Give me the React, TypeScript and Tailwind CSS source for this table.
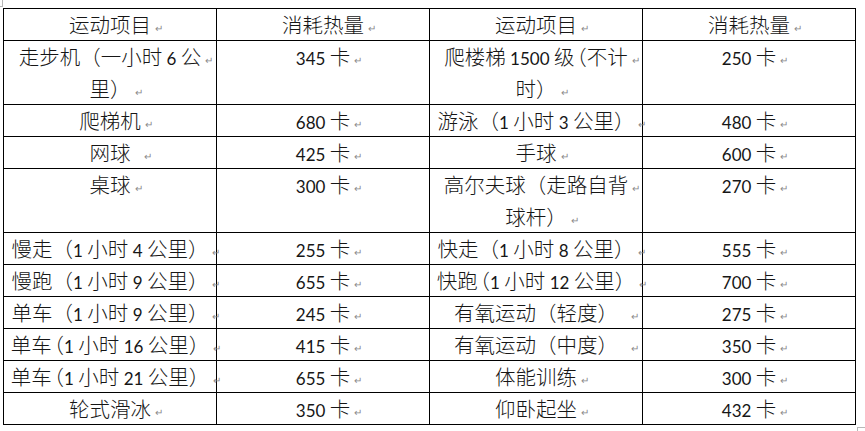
import React from "react";

// 每个单元格：字符串或多行数组；"^（" 表示被 Word 压缩的左括号
type Cell = string | string[];

const rows: Cell[][] = [
    [["走步机（一小时 6 公", "里）"], "345 卡", ["爬楼梯 1500 级^（不计", "时）"], "250 卡"],
    ["爬梯机", "680 卡", "游泳（1 小时 3 公里）", "480 卡"],
    ["网球 ", "425 卡", "手球", "600 卡"],
    ["桌球", "300 卡", ["高尔夫球（走路自背", "球杆）"], "270 卡"],
    ["慢走（1 小时 4 公里）", "255 卡", "快走（1 小时 8 公里）", "555 卡"],
    ["慢跑（1 小时 9 公里）", "655 卡", "快跑^（1 小时 12 公里）", "700 卡"],
    ["单车（1 小时 9 公里）", "245 卡", "有氧运动（轻度） ", "275 卡"],
    ["单车^（1 小时 16 公里）", "415 卡", "有氧运动（中度） ", "350 卡"],
    ["单车^（1 小时 21 公里）", "655 卡", "体能训练", "300 卡"],
    ["轮式滑冰", "350 卡", "仰卧起坐", "432 卡"],
];

const headers = ["运动项目", "消耗热量", "运动项目", "消耗热量"];

// 把一行文字拆成 CJK 部分和拉丁/数字部分
function renderText(text: string) {
    const parts = text.split(/(\^（|[\x20-\x7e]+)/).filter((p) => p !== "");
    return parts.map((p, i) => {
        if (p === "^（") {
            return (
                <span key={i} className="-ml-[0.4em]">
                    （
                </span>
            );
        }
        if (/^[\x20-\x7e]+$/.test(p)) {
            return (
                <span key={i} className="font-['Lato'] font-normal text-[17px]">
                    {p}
                </span>
            );
        }
        return <span key={i}>{p}</span>;
    });
}

function Line({ text, tall }: { text: string; tall: boolean }) {
    const trailing = text.endsWith(" ");
    const body = trailing ? text.trimEnd() : text;
    return (
        <div className={`${tall ? "h-[31.5px]" : "h-[31px]"} leading-[31px] flex justify-center whitespace-nowrap`}>
            <span>
                {renderText(body)}
                <span className="inline-block w-0">
                    <span className={`${trailing ? "pl-[13px]" : "pl-[4px]"} align-[1px] text-[10px] leading-none text-[#8a8a8a] font-['DejaVu_Sans']`}>
                        ↵
                    </span>
                </span>
            </span>
        </div>
    );
}

function TableCell({ cell }: { cell: Cell }) {
    const lines = Array.isArray(cell) ? cell : [cell];
    return (
        <div className="border-r border-b border-black px-[7px]">
            {lines.map((l, i) => (
                <Line key={i} text={l} tall={lines.length > 1} />
            ))}
        </div>
    );
}

export default function App() {
    return (
        <div
            className="relative w-[865px] h-[431px] overflow-hidden bg-white text-[20.5px] font-light text-[#161616]"
            style={{ fontFamily: '"Noto Sans CJK SC", "Noto Sans", sans-serif' }}
        >
            {/* Word 文本边界标记 */}
            <span className="absolute left-0 top-0 w-[3px] h-[7px] border-r border-b border-[#b8b8b8]" />
            <span className="absolute left-[857px] top-[427px] w-[8px] h-[4px] border-l border-t border-[#b8b8b8]" />

            <div className="ml-[3px] mt-[8px] w-[853px] border-l border-t border-black">
                <div className="grid grid-cols-[213px_213px_213px_213px]">
                    {headers.map((h, i) => (
                        <TableCell key={i} cell={h} />
                    ))}
                </div>
                {rows.map((row, ri) => (
                    <div key={ri} className="grid grid-cols-[213px_213px_213px_213px]">
                        {row.map((cell, ci) => (
                            <TableCell key={ci} cell={cell} />
                        ))}
                    </div>
                ))}
            </div>
        </div>
    );
}
